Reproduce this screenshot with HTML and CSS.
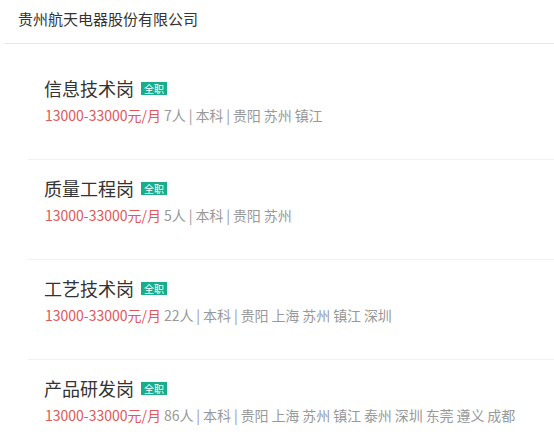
FILE: index.html
```html
<!DOCTYPE html>
<html>
<head>
<meta charset="utf-8" />
<title>贵州航天电器股份有限公司</title>
<link rel="stylesheet" href="styles.css">
</head>
<body>

<div class="company">贵州航天电器股份有限公司</div>

<ul class="jobs">
  <li class="job">
    <div class="job-title">信息技术岗 <span class="tag">全职</span></div>
    <div class="job-info"><span class="salary">13000-33000元/月</span> 7人 | 本科 | 贵阳 苏州 镇江</div>
  </li>
  <li class="job">
    <div class="job-title">质量工程岗 <span class="tag">全职</span></div>
    <div class="job-info"><span class="salary">13000-33000元/月</span> 5人 | 本科 | 贵阳 苏州</div>
  </li>
  <li class="job">
    <div class="job-title">工艺技术岗 <span class="tag">全职</span></div>
    <div class="job-info"><span class="salary">13000-33000元/月</span> 22人 | 本科 | 贵阳 上海 苏州 镇江 深圳</div>
  </li>
  <li class="job">
    <div class="job-title">产品研发岗 <span class="tag">全职</span></div>
    <div class="job-info"><span class="salary">13000-33000元/月</span> 86人 | 本科 | 贵阳 上海 苏州 镇江 泰州 深圳 东莞 遵义 成都</div>
  </li>
</ul>

</body>
</html>
```

FILE: styles.css
```css
*{margin:0;padding:0;font-family:"Noto Sans CJK SC",sans-serif;}
body{background:#fff;}
ul{list-style:none;}

.company{margin-left:4px;padding:0 14px;height:43px;line-height:38px;font-size:15px;color:#333;border-bottom:1px solid #e6e6e6;}

.jobs{margin-left:28px;padding-top:16px;}
.job{height:83px;padding-top:16px;border-bottom:1px solid #f2f2f2;padding-left:16px;}
.job-title{font-size:18px;line-height:24px;color:#333;display:flex;align-items:center;}
.tag{margin-left:7px;background:#1aad8a;color:#fff;font-size:10px;line-height:13px;padding:0 3px;}
.job-info{margin-top:5px;padding-left:1px;font-size:14px;line-height:20px;color:#999;letter-spacing:-0.1px;}
.salary{color:#e0585c;letter-spacing:0;}
```
